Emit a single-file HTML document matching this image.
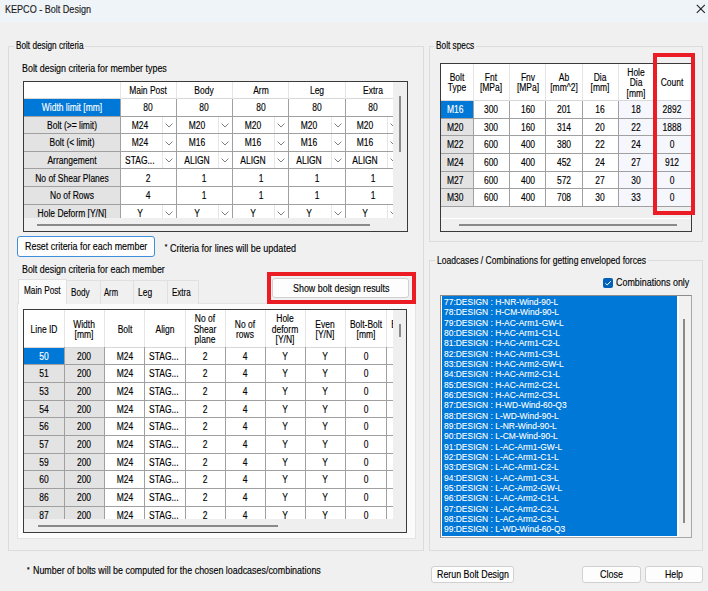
<!DOCTYPE html>
<html><head><meta charset="utf-8"><style>
html,body{margin:0;padding:0;}
body{width:708px;height:591px;overflow:hidden;background:#f0f0f0;position:relative;font-family:"Liberation Sans", sans-serif;}
div{position:absolute;}
.t{white-space:nowrap;-webkit-text-stroke:0.15px currentColor;}
</style></head><body>
<div style="left:0px;top:0px;width:708px;height:22px;background:#eff4f9"></div><div class="t" style="left:5.1px;top:3.33px;font-size:11.38px;line-height:13.65px;color:#1a1a1a;transform:scaleX(0.7956);transform-origin:0 0;">KEPCO - Bolt Design</div><svg style="position:absolute;left:696px;top:4px" width="10" height="10" viewBox="0 0 10 10"><path d="M0.8 0.8 L8.8 8.8 M8.8 0.8 L0.8 8.8" stroke="#202020" stroke-width="1.1" fill="none"/></svg><div style="left:8px;top:45.5px;width:416px;height:505.5px;border:1px solid #dcdcdc;box-sizing:border-box"></div><div style="left:13.5px;top:42.5px;width:71.5px;height:6px;background:#f0f0f0"></div><div class="t" style="left:15.5px;top:40.48px;font-size:10.38px;line-height:12.45px;color:#000;transform:scaleX(0.7909);transform-origin:0 0;">Bolt design criteria</div><div style="left:429px;top:45.5px;width:274px;height:196px;border:1px solid #dcdcdc;box-sizing:border-box"></div><div style="left:434px;top:42.5px;width:42.2px;height:6px;background:#f0f0f0"></div><div class="t" style="left:436px;top:40.48px;font-size:10.38px;line-height:12.45px;color:#000;transform:scaleX(0.7981);transform-origin:0 0;">Bolt specs</div><div style="left:429px;top:260px;width:274px;height:290.5px;border:1px solid #dcdcdc;box-sizing:border-box"></div><div style="left:434.5px;top:257px;width:213px;height:6px;background:#f0f0f0"></div><div class="t" style="left:436.5px;top:254.13px;font-size:10.75px;line-height:12.9px;color:#000;transform:scaleX(0.7967);transform-origin:0 0;">Loadcases / Combinations for getting enveloped forces</div><div class="t" style="left:22px;top:62.02px;font-size:11.12px;line-height:13.35px;color:#000;transform:scaleX(0.8004);transform-origin:0 0;">Bolt design criteria for member types</div><div style="left:23px;top:81px;width:384px;height:150px;background:#fff;overflow:hidden"><div style="left:0;top:0;width:370.3px;height:137px;overflow:hidden"><div style="left:0px;top:17.7px;width:97px;height:17.56px;background:#0078d7"></div><div style="left:0px;top:35.26px;width:97px;height:17.56px;background:#e3e3e3"></div><div style="left:0px;top:52.82px;width:97px;height:17.56px;background:#e3e3e3"></div><div style="left:0px;top:70.38px;width:97px;height:17.56px;background:#e3e3e3"></div><div style="left:0px;top:87.94px;width:97px;height:17.56px;background:#e3e3e3"></div><div style="left:0px;top:105.5px;width:97px;height:17.56px;background:#e3e3e3"></div><div style="left:0px;top:123.06px;width:97px;height:17.56px;background:#e3e3e3"></div><div style="left:0px;top:17.2px;width:380px;height:1px;background:#d8d8d8"></div><div style="left:0px;top:34.76px;width:380px;height:1px;background:#a0a0a0"></div><div style="left:0px;top:52.32px;width:380px;height:1px;background:#a0a0a0"></div><div style="left:0px;top:69.88px;width:380px;height:1px;background:#a0a0a0"></div><div style="left:0px;top:87.44px;width:380px;height:1px;background:#a0a0a0"></div><div style="left:0px;top:105px;width:380px;height:1px;background:#a0a0a0"></div><div style="left:0px;top:122.56px;width:380px;height:1px;background:#a0a0a0"></div><div style="left:0px;top:140.12px;width:380px;height:1px;background:#a0a0a0"></div><div style="left:96.5px;top:17.7px;width:1px;height:140px;background:#a0a0a0"></div><div style="left:96.5px;top:0px;width:1px;height:17.7px;background:#e5e5e5"></div><div style="left:152.75px;top:17.7px;width:1px;height:140px;background:#a0a0a0"></div><div style="left:152.75px;top:0px;width:1px;height:17.7px;background:#e5e5e5"></div><div style="left:209px;top:17.7px;width:1px;height:140px;background:#a0a0a0"></div><div style="left:209px;top:0px;width:1px;height:17.7px;background:#e5e5e5"></div><div style="left:265.25px;top:17.7px;width:1px;height:140px;background:#a0a0a0"></div><div style="left:265.25px;top:0px;width:1px;height:17.7px;background:#e5e5e5"></div><div style="left:321.5px;top:17.7px;width:1px;height:140px;background:#a0a0a0"></div><div style="left:321.5px;top:0px;width:1px;height:17.7px;background:#e5e5e5"></div><div style="left:377.75px;top:17.7px;width:1px;height:140px;background:#a0a0a0"></div><div style="left:377.75px;top:0px;width:1px;height:17.7px;background:#e5e5e5"></div><div class="t" style="left:65.12px;top:3.19px;width:120px;text-align:center;font-size:10.62px;line-height:12.75px;color:#000;transform:scaleX(0.8);">Main Post</div><div class="t" style="left:121.38px;top:3.19px;width:120px;text-align:center;font-size:10.62px;line-height:12.75px;color:#000;transform:scaleX(0.8);">Body</div><div class="t" style="left:177.62px;top:3.19px;width:120px;text-align:center;font-size:10.62px;line-height:12.75px;color:#000;transform:scaleX(0.8);">Arm</div><div class="t" style="left:233.88px;top:3.19px;width:120px;text-align:center;font-size:10.62px;line-height:12.75px;color:#000;transform:scaleX(0.8);">Leg</div><div class="t" style="left:290.12px;top:3.19px;width:120px;text-align:center;font-size:10.62px;line-height:12.75px;color:#000;transform:scaleX(0.8);">Extra</div><div class="t" style="left:-11.5px;top:20.32px;width:120px;text-align:center;font-size:10.62px;line-height:12.75px;color:#fff;transform:scaleX(0.8);">Width limit [mm]</div><div class="t" style="left:-11.5px;top:37.88px;width:120px;text-align:center;font-size:10.62px;line-height:12.75px;color:#000;transform:scaleX(0.8);">Bolt (&gt;= limit)</div><div class="t" style="left:-11.5px;top:55.44px;width:120px;text-align:center;font-size:10.62px;line-height:12.75px;color:#000;transform:scaleX(0.8);">Bolt (&lt; limit)</div><div class="t" style="left:-11.5px;top:73px;width:120px;text-align:center;font-size:10.62px;line-height:12.75px;color:#000;transform:scaleX(0.8);">Arrangement</div><div class="t" style="left:-11.5px;top:90.56px;width:120px;text-align:center;font-size:10.62px;line-height:12.75px;color:#000;transform:scaleX(0.8);">No of Shear Planes</div><div class="t" style="left:-11.5px;top:108.12px;width:120px;text-align:center;font-size:10.62px;line-height:12.75px;color:#000;transform:scaleX(0.8);">No of Rows</div><div class="t" style="left:-11.5px;top:125.68px;width:120px;text-align:center;font-size:10.62px;line-height:12.75px;color:#000;transform:scaleX(0.8);">Hole Deform [Y/N]</div><div class="t" style="left:65.12px;top:20.32px;width:120px;text-align:center;font-size:10.62px;line-height:12.75px;color:#000;transform:scaleX(0.8);">80</div><div class="t" style="left:121.38px;top:20.32px;width:120px;text-align:center;font-size:10.62px;line-height:12.75px;color:#000;transform:scaleX(0.8);">80</div><div class="t" style="left:177.62px;top:20.32px;width:120px;text-align:center;font-size:10.62px;line-height:12.75px;color:#000;transform:scaleX(0.8);">80</div><div class="t" style="left:233.88px;top:20.32px;width:120px;text-align:center;font-size:10.62px;line-height:12.75px;color:#000;transform:scaleX(0.8);">80</div><div class="t" style="left:290.12px;top:20.32px;width:120px;text-align:center;font-size:10.62px;line-height:12.75px;color:#000;transform:scaleX(0.8);">80</div><div style="left:138.75px;top:35.86px;width:1px;height:16.36px;background:#e6e6e6"></div><svg style="position:absolute;left:141.75px;top:42.24px" width="8" height="5" viewBox="0 0 8 5"><path d="M0.6 0.6 L4 4 L7.4 0.6" stroke="#707070" stroke-width="0.9" fill="none"/></svg><div class="t" style="left:57.43px;top:37.88px;width:120px;text-align:center;font-size:10.62px;line-height:12.75px;color:#000;transform:scaleX(0.8);">M24</div><div style="left:195px;top:35.86px;width:1px;height:16.36px;background:#e6e6e6"></div><svg style="position:absolute;left:198px;top:42.24px" width="8" height="5" viewBox="0 0 8 5"><path d="M0.6 0.6 L4 4 L7.4 0.6" stroke="#707070" stroke-width="0.9" fill="none"/></svg><div class="t" style="left:113.68px;top:37.88px;width:120px;text-align:center;font-size:10.62px;line-height:12.75px;color:#000;transform:scaleX(0.8);">M20</div><div style="left:251.25px;top:35.86px;width:1px;height:16.36px;background:#e6e6e6"></div><svg style="position:absolute;left:254.25px;top:42.24px" width="8" height="5" viewBox="0 0 8 5"><path d="M0.6 0.6 L4 4 L7.4 0.6" stroke="#707070" stroke-width="0.9" fill="none"/></svg><div class="t" style="left:169.93px;top:37.88px;width:120px;text-align:center;font-size:10.62px;line-height:12.75px;color:#000;transform:scaleX(0.8);">M20</div><div style="left:307.5px;top:35.86px;width:1px;height:16.36px;background:#e6e6e6"></div><svg style="position:absolute;left:310.5px;top:42.24px" width="8" height="5" viewBox="0 0 8 5"><path d="M0.6 0.6 L4 4 L7.4 0.6" stroke="#707070" stroke-width="0.9" fill="none"/></svg><div class="t" style="left:226.18px;top:37.88px;width:120px;text-align:center;font-size:10.62px;line-height:12.75px;color:#000;transform:scaleX(0.8);">M20</div><div style="left:363.75px;top:35.86px;width:1px;height:16.36px;background:#e6e6e6"></div><svg style="position:absolute;left:366.75px;top:42.24px" width="8" height="5" viewBox="0 0 8 5"><path d="M0.6 0.6 L4 4 L7.4 0.6" stroke="#707070" stroke-width="0.9" fill="none"/></svg><div class="t" style="left:282.43px;top:37.88px;width:120px;text-align:center;font-size:10.62px;line-height:12.75px;color:#000;transform:scaleX(0.8);">M20</div><div style="left:138.75px;top:53.42px;width:1px;height:16.36px;background:#e6e6e6"></div><svg style="position:absolute;left:141.75px;top:59.8px" width="8" height="5" viewBox="0 0 8 5"><path d="M0.6 0.6 L4 4 L7.4 0.6" stroke="#707070" stroke-width="0.9" fill="none"/></svg><div class="t" style="left:57.43px;top:55.44px;width:120px;text-align:center;font-size:10.62px;line-height:12.75px;color:#000;transform:scaleX(0.8);">M24</div><div style="left:195px;top:53.42px;width:1px;height:16.36px;background:#e6e6e6"></div><svg style="position:absolute;left:198px;top:59.8px" width="8" height="5" viewBox="0 0 8 5"><path d="M0.6 0.6 L4 4 L7.4 0.6" stroke="#707070" stroke-width="0.9" fill="none"/></svg><div class="t" style="left:113.68px;top:55.44px;width:120px;text-align:center;font-size:10.62px;line-height:12.75px;color:#000;transform:scaleX(0.8);">M16</div><div style="left:251.25px;top:53.42px;width:1px;height:16.36px;background:#e6e6e6"></div><svg style="position:absolute;left:254.25px;top:59.8px" width="8" height="5" viewBox="0 0 8 5"><path d="M0.6 0.6 L4 4 L7.4 0.6" stroke="#707070" stroke-width="0.9" fill="none"/></svg><div class="t" style="left:169.93px;top:55.44px;width:120px;text-align:center;font-size:10.62px;line-height:12.75px;color:#000;transform:scaleX(0.8);">M16</div><div style="left:307.5px;top:53.42px;width:1px;height:16.36px;background:#e6e6e6"></div><svg style="position:absolute;left:310.5px;top:59.8px" width="8" height="5" viewBox="0 0 8 5"><path d="M0.6 0.6 L4 4 L7.4 0.6" stroke="#707070" stroke-width="0.9" fill="none"/></svg><div class="t" style="left:226.18px;top:55.44px;width:120px;text-align:center;font-size:10.62px;line-height:12.75px;color:#000;transform:scaleX(0.8);">M16</div><div style="left:363.75px;top:53.42px;width:1px;height:16.36px;background:#e6e6e6"></div><svg style="position:absolute;left:366.75px;top:59.8px" width="8" height="5" viewBox="0 0 8 5"><path d="M0.6 0.6 L4 4 L7.4 0.6" stroke="#707070" stroke-width="0.9" fill="none"/></svg><div class="t" style="left:282.43px;top:55.44px;width:120px;text-align:center;font-size:10.62px;line-height:12.75px;color:#000;transform:scaleX(0.8);">M16</div><div style="left:138.75px;top:70.98px;width:1px;height:16.36px;background:#e6e6e6"></div><svg style="position:absolute;left:141.75px;top:77.36px" width="8" height="5" viewBox="0 0 8 5"><path d="M0.6 0.6 L4 4 L7.4 0.6" stroke="#707070" stroke-width="0.9" fill="none"/></svg><div class="t" style="left:101.5px;top:73px;font-size:10.62px;line-height:12.75px;color:#000;transform:scaleX(0.8000);transform-origin:0 0;">STAG...</div><div style="left:195px;top:70.98px;width:1px;height:16.36px;background:#e6e6e6"></div><svg style="position:absolute;left:198px;top:77.36px" width="8" height="5" viewBox="0 0 8 5"><path d="M0.6 0.6 L4 4 L7.4 0.6" stroke="#707070" stroke-width="0.9" fill="none"/></svg><div class="t" style="left:113.68px;top:73px;width:120px;text-align:center;font-size:10.62px;line-height:12.75px;color:#000;transform:scaleX(0.8);">ALIGN</div><div style="left:251.25px;top:70.98px;width:1px;height:16.36px;background:#e6e6e6"></div><svg style="position:absolute;left:254.25px;top:77.36px" width="8" height="5" viewBox="0 0 8 5"><path d="M0.6 0.6 L4 4 L7.4 0.6" stroke="#707070" stroke-width="0.9" fill="none"/></svg><div class="t" style="left:169.93px;top:73px;width:120px;text-align:center;font-size:10.62px;line-height:12.75px;color:#000;transform:scaleX(0.8);">ALIGN</div><div style="left:307.5px;top:70.98px;width:1px;height:16.36px;background:#e6e6e6"></div><svg style="position:absolute;left:310.5px;top:77.36px" width="8" height="5" viewBox="0 0 8 5"><path d="M0.6 0.6 L4 4 L7.4 0.6" stroke="#707070" stroke-width="0.9" fill="none"/></svg><div class="t" style="left:226.18px;top:73px;width:120px;text-align:center;font-size:10.62px;line-height:12.75px;color:#000;transform:scaleX(0.8);">ALIGN</div><div style="left:363.75px;top:70.98px;width:1px;height:16.36px;background:#e6e6e6"></div><svg style="position:absolute;left:366.75px;top:77.36px" width="8" height="5" viewBox="0 0 8 5"><path d="M0.6 0.6 L4 4 L7.4 0.6" stroke="#707070" stroke-width="0.9" fill="none"/></svg><div class="t" style="left:282.43px;top:73px;width:120px;text-align:center;font-size:10.62px;line-height:12.75px;color:#000;transform:scaleX(0.8);">ALIGN</div><div class="t" style="left:65.12px;top:90.56px;width:120px;text-align:center;font-size:10.62px;line-height:12.75px;color:#000;transform:scaleX(0.8);">2</div><div class="t" style="left:121.38px;top:90.56px;width:120px;text-align:center;font-size:10.62px;line-height:12.75px;color:#000;transform:scaleX(0.8);">1</div><div class="t" style="left:177.62px;top:90.56px;width:120px;text-align:center;font-size:10.62px;line-height:12.75px;color:#000;transform:scaleX(0.8);">1</div><div class="t" style="left:233.88px;top:90.56px;width:120px;text-align:center;font-size:10.62px;line-height:12.75px;color:#000;transform:scaleX(0.8);">1</div><div class="t" style="left:290.12px;top:90.56px;width:120px;text-align:center;font-size:10.62px;line-height:12.75px;color:#000;transform:scaleX(0.8);">1</div><div class="t" style="left:65.12px;top:108.12px;width:120px;text-align:center;font-size:10.62px;line-height:12.75px;color:#000;transform:scaleX(0.8);">4</div><div class="t" style="left:121.38px;top:108.12px;width:120px;text-align:center;font-size:10.62px;line-height:12.75px;color:#000;transform:scaleX(0.8);">1</div><div class="t" style="left:177.62px;top:108.12px;width:120px;text-align:center;font-size:10.62px;line-height:12.75px;color:#000;transform:scaleX(0.8);">1</div><div class="t" style="left:233.88px;top:108.12px;width:120px;text-align:center;font-size:10.62px;line-height:12.75px;color:#000;transform:scaleX(0.8);">1</div><div class="t" style="left:290.12px;top:108.12px;width:120px;text-align:center;font-size:10.62px;line-height:12.75px;color:#000;transform:scaleX(0.8);">1</div><div style="left:138.75px;top:123.66px;width:1px;height:16.36px;background:#e6e6e6"></div><svg style="position:absolute;left:141.75px;top:130.04px" width="8" height="5" viewBox="0 0 8 5"><path d="M0.6 0.6 L4 4 L7.4 0.6" stroke="#707070" stroke-width="0.9" fill="none"/></svg><div class="t" style="left:57.43px;top:125.68px;width:120px;text-align:center;font-size:10.62px;line-height:12.75px;color:#000;transform:scaleX(0.8);">Y</div><div style="left:195px;top:123.66px;width:1px;height:16.36px;background:#e6e6e6"></div><svg style="position:absolute;left:198px;top:130.04px" width="8" height="5" viewBox="0 0 8 5"><path d="M0.6 0.6 L4 4 L7.4 0.6" stroke="#707070" stroke-width="0.9" fill="none"/></svg><div class="t" style="left:113.68px;top:125.68px;width:120px;text-align:center;font-size:10.62px;line-height:12.75px;color:#000;transform:scaleX(0.8);">Y</div><div style="left:251.25px;top:123.66px;width:1px;height:16.36px;background:#e6e6e6"></div><svg style="position:absolute;left:254.25px;top:130.04px" width="8" height="5" viewBox="0 0 8 5"><path d="M0.6 0.6 L4 4 L7.4 0.6" stroke="#707070" stroke-width="0.9" fill="none"/></svg><div class="t" style="left:169.93px;top:125.68px;width:120px;text-align:center;font-size:10.62px;line-height:12.75px;color:#000;transform:scaleX(0.8);">Y</div><div style="left:307.5px;top:123.66px;width:1px;height:16.36px;background:#e6e6e6"></div><svg style="position:absolute;left:310.5px;top:130.04px" width="8" height="5" viewBox="0 0 8 5"><path d="M0.6 0.6 L4 4 L7.4 0.6" stroke="#707070" stroke-width="0.9" fill="none"/></svg><div class="t" style="left:226.18px;top:125.68px;width:120px;text-align:center;font-size:10.62px;line-height:12.75px;color:#000;transform:scaleX(0.8);">Y</div><div style="left:363.75px;top:123.66px;width:1px;height:16.36px;background:#e6e6e6"></div><svg style="position:absolute;left:366.75px;top:130.04px" width="8" height="5" viewBox="0 0 8 5"><path d="M0.6 0.6 L4 4 L7.4 0.6" stroke="#707070" stroke-width="0.9" fill="none"/></svg><div class="t" style="left:282.43px;top:125.68px;width:120px;text-align:center;font-size:10.62px;line-height:12.75px;color:#000;transform:scaleX(0.8);">Y</div></div><div style="left:370.3px;top:0px;width:13.7px;height:137px;background:#efefef"></div><div style="left:0px;top:137px;width:384px;height:13px;background:#efefef"></div><div style="left:376.3px;top:14.5px;width:2px;height:56.5px;background:#8a8a8a"></div><div style="left:14px;top:143px;width:333px;height:1.6px;background:#8a8a8a"></div></div><div style="left:22.5px;top:80.8px;width:385px;height:151.2px;border:1px solid #3a3a3a;box-sizing:border-box"></div><div style="left:17px;top:236px;width:137.5px;height:21px;border:1.5px solid #3f8fdc;border-radius:3px;background:#fdfdfd;box-sizing:border-box"></div><div class="t" style="left:25px;top:240.27px;font-size:11.12px;line-height:13.35px;color:#000;transform:scaleX(0.8022);transform-origin:0 0;">Reset criteria for each member</div><div class="t" style="left:164.8px;top:242.85px;font-size:6.5px;line-height:7.8px;color:#000;transform:scaleX(1.0000);transform-origin:0 0;">*</div><div class="t" style="left:170.2px;top:241.77px;font-size:11.12px;line-height:13.35px;color:#000;transform:scaleX(0.8125);transform-origin:0 0;">Criteria for lines will be updated</div><div class="t" style="left:22px;top:263.27px;font-size:11.12px;line-height:13.35px;color:#000;transform:scaleX(0.8003);transform-origin:0 0;">Bolt design criteria for each member</div><div style="left:17.2px;top:303px;width:399px;height:235.5px;background:#fbfbfb;border:1px solid #e3e3e3;box-sizing:border-box"></div><div style="left:66.4px;top:280px;width:33.3px;height:23.5px;background:#f0f0f0;border-left:1px solid #e0e0e0;border-top:1px solid #e0e0e0;box-sizing:border-box"></div><div class="t" style="left:70.7px;top:285.67px;font-size:11.12px;line-height:13.35px;color:#000;transform:scaleX(0.7335);transform-origin:0 0;">Body</div><div style="left:99.7px;top:280px;width:32.9px;height:23.5px;background:#f0f0f0;border-left:1px solid #e0e0e0;border-top:1px solid #e0e0e0;box-sizing:border-box"></div><div class="t" style="left:104.3px;top:285.67px;font-size:11.12px;line-height:13.35px;color:#000;transform:scaleX(0.6915);transform-origin:0 0;">Arm</div><div style="left:132.6px;top:280px;width:34.4px;height:23.5px;background:#f0f0f0;border-left:1px solid #e0e0e0;border-top:1px solid #e0e0e0;box-sizing:border-box"></div><div class="t" style="left:138.2px;top:285.67px;font-size:11.12px;line-height:13.35px;color:#000;transform:scaleX(0.7597);transform-origin:0 0;">Leg</div><div style="left:167px;top:280px;width:31.7px;height:23.5px;background:#f0f0f0;border-left:1px solid #e0e0e0;border-top:1px solid #e0e0e0;border-right:1px solid #e0e0e0;box-sizing:border-box"></div><div class="t" style="left:172.1px;top:285.67px;font-size:11.12px;line-height:13.35px;color:#000;transform:scaleX(0.7202);transform-origin:0 0;">Extra</div><div style="left:17.6px;top:278.5px;width:49.6px;height:25.5px;background:#fbfbfb;border:1px solid #e0e0e0;border-bottom:none;box-sizing:border-box"></div><div class="t" style="left:23.6px;top:283.97px;font-size:11.12px;line-height:13.35px;color:#000;transform:scaleX(0.7420);transform-origin:0 0;">Main Post</div><div style="left:272.4px;top:278.3px;width:136.6px;height:19.8px;border:1px solid #d0d0d0;border-radius:3px;background:#fdfdfd;box-sizing:border-box"></div><div class="t" style="left:292.7px;top:282.07px;font-size:11.12px;line-height:13.35px;color:#000;transform:scaleX(0.8011);transform-origin:0 0;">Show bolt design results</div><div style="left:267.3px;top:272.2px;width:149.2px;height:32.3px;border:4.2px solid #ec1c24;box-sizing:border-box"></div><div style="left:23.5px;top:309.5px;width:383.5px;height:223px;background:#fff;overflow:hidden"><div style="left:0;top:0;width:369.2px;height:209.25px;overflow:hidden"><div style="left:0px;top:37.6px;width:80.75px;height:17.67px;background:#e3e3e3"></div><div style="left:0px;top:37.6px;width:40.75px;height:17.67px;background:#0078d7"></div><div style="left:0px;top:55.27px;width:80.75px;height:17.67px;background:#e3e3e3"></div><div style="left:0px;top:72.94px;width:80.75px;height:17.67px;background:#e3e3e3"></div><div style="left:0px;top:90.61px;width:80.75px;height:17.67px;background:#e3e3e3"></div><div style="left:0px;top:108.28px;width:80.75px;height:17.67px;background:#e3e3e3"></div><div style="left:0px;top:125.95px;width:80.75px;height:17.67px;background:#e3e3e3"></div><div style="left:0px;top:143.62px;width:80.75px;height:17.67px;background:#e3e3e3"></div><div style="left:0px;top:161.29px;width:80.75px;height:17.67px;background:#e3e3e3"></div><div style="left:0px;top:178.96px;width:80.75px;height:17.67px;background:#e3e3e3"></div><div style="left:0px;top:196.63px;width:80.75px;height:17.67px;background:#e3e3e3"></div><div style="left:0px;top:37.1px;width:400px;height:1px;background:#d8d8d8"></div><div style="left:0px;top:54.77px;width:400px;height:1px;background:#a0a0a0"></div><div style="left:0px;top:72.44px;width:400px;height:1px;background:#a0a0a0"></div><div style="left:0px;top:90.11px;width:400px;height:1px;background:#a0a0a0"></div><div style="left:0px;top:107.78px;width:400px;height:1px;background:#a0a0a0"></div><div style="left:0px;top:125.45px;width:400px;height:1px;background:#a0a0a0"></div><div style="left:0px;top:143.12px;width:400px;height:1px;background:#a0a0a0"></div><div style="left:0px;top:160.79px;width:400px;height:1px;background:#a0a0a0"></div><div style="left:0px;top:178.46px;width:400px;height:1px;background:#a0a0a0"></div><div style="left:0px;top:196.13px;width:400px;height:1px;background:#a0a0a0"></div><div style="left:0px;top:213.8px;width:400px;height:1px;background:#a0a0a0"></div><div style="left:40.25px;top:37.6px;width:1px;height:200px;background:#a0a0a0"></div><div style="left:40.25px;top:0px;width:1px;height:37.6px;background:#e5e5e5"></div><div style="left:80.25px;top:37.6px;width:1px;height:200px;background:#a0a0a0"></div><div style="left:80.25px;top:0px;width:1px;height:37.6px;background:#e5e5e5"></div><div style="left:120.75px;top:37.6px;width:1px;height:200px;background:#a0a0a0"></div><div style="left:120.75px;top:0px;width:1px;height:37.6px;background:#e5e5e5"></div><div style="left:161px;top:37.6px;width:1px;height:200px;background:#a0a0a0"></div><div style="left:161px;top:0px;width:1px;height:37.6px;background:#e5e5e5"></div><div style="left:201px;top:37.6px;width:1px;height:200px;background:#a0a0a0"></div><div style="left:201px;top:0px;width:1px;height:37.6px;background:#e5e5e5"></div><div style="left:241px;top:37.6px;width:1px;height:200px;background:#a0a0a0"></div><div style="left:241px;top:0px;width:1px;height:37.6px;background:#e5e5e5"></div><div style="left:281px;top:37.6px;width:1px;height:200px;background:#a0a0a0"></div><div style="left:281px;top:0px;width:1px;height:37.6px;background:#e5e5e5"></div><div style="left:321.5px;top:37.6px;width:1px;height:200px;background:#a0a0a0"></div><div style="left:321.5px;top:0px;width:1px;height:37.6px;background:#e5e5e5"></div><div style="left:362px;top:37.6px;width:1px;height:200px;background:#a0a0a0"></div><div style="left:362px;top:0px;width:1px;height:37.6px;background:#e5e5e5"></div><div class="t" style="left:-39.62px;top:13.24px;width:120px;text-align:center;font-size:10.62px;line-height:12.75px;color:#000;transform:scaleX(0.8);">Line ID</div><div class="t" style="left:0.75px;top:8.04px;width:120px;text-align:center;font-size:10.62px;line-height:12.75px;color:#000;transform:scaleX(0.8);">Width</div><div class="t" style="left:0.75px;top:18.44px;width:120px;text-align:center;font-size:10.62px;line-height:12.75px;color:#000;transform:scaleX(0.8);">[mm]</div><div class="t" style="left:41px;top:13.24px;width:120px;text-align:center;font-size:10.62px;line-height:12.75px;color:#000;transform:scaleX(0.8);">Bolt</div><div class="t" style="left:81.38px;top:13.24px;width:120px;text-align:center;font-size:10.62px;line-height:12.75px;color:#000;transform:scaleX(0.8);">Align</div><div class="t" style="left:121.5px;top:2.84px;width:120px;text-align:center;font-size:10.62px;line-height:12.75px;color:#000;transform:scaleX(0.8);">No of</div><div class="t" style="left:121.5px;top:13.24px;width:120px;text-align:center;font-size:10.62px;line-height:12.75px;color:#000;transform:scaleX(0.8);">Shear</div><div class="t" style="left:121.5px;top:23.64px;width:120px;text-align:center;font-size:10.62px;line-height:12.75px;color:#000;transform:scaleX(0.8);">plane</div><div class="t" style="left:161.5px;top:8.04px;width:120px;text-align:center;font-size:10.62px;line-height:12.75px;color:#000;transform:scaleX(0.8);">No of</div><div class="t" style="left:161.5px;top:18.44px;width:120px;text-align:center;font-size:10.62px;line-height:12.75px;color:#000;transform:scaleX(0.8);">rows</div><div class="t" style="left:201.5px;top:2.84px;width:120px;text-align:center;font-size:10.62px;line-height:12.75px;color:#000;transform:scaleX(0.8);">Hole</div><div class="t" style="left:201.5px;top:13.24px;width:120px;text-align:center;font-size:10.62px;line-height:12.75px;color:#000;transform:scaleX(0.8);">deform</div><div class="t" style="left:201.5px;top:23.64px;width:120px;text-align:center;font-size:10.62px;line-height:12.75px;color:#000;transform:scaleX(0.8);">[Y/N]</div><div class="t" style="left:241.75px;top:8.04px;width:120px;text-align:center;font-size:10.62px;line-height:12.75px;color:#000;transform:scaleX(0.8);">Even</div><div class="t" style="left:241.75px;top:18.44px;width:120px;text-align:center;font-size:10.62px;line-height:12.75px;color:#000;transform:scaleX(0.8);">[Y/N]</div><div class="t" style="left:282.25px;top:8.04px;width:120px;text-align:center;font-size:10.62px;line-height:12.75px;color:#000;transform:scaleX(0.8);">Bolt-Bolt</div><div class="t" style="left:282.25px;top:18.44px;width:120px;text-align:center;font-size:10.62px;line-height:12.75px;color:#000;transform:scaleX(0.8);">[mm]</div><div class="t" style="left:326.5px;top:8.04px;width:120px;text-align:center;font-size:10.62px;line-height:12.75px;color:#000;transform:scaleX(0.8);">Bolt-Edge</div><div class="t" style="left:326.5px;top:18.44px;width:120px;text-align:center;font-size:10.62px;line-height:12.75px;color:#000;transform:scaleX(0.8);">[mm]</div><div class="t" style="left:-39.62px;top:40.28px;width:120px;text-align:center;font-size:10.62px;line-height:12.75px;color:#fff;transform:scaleX(0.8);">50</div><div class="t" style="left:0.75px;top:40.28px;width:120px;text-align:center;font-size:10.62px;line-height:12.75px;color:#000;transform:scaleX(0.8);">200</div><div class="t" style="left:41px;top:40.28px;width:120px;text-align:center;font-size:10.62px;line-height:12.75px;color:#000;transform:scaleX(0.8);">M24</div><div class="t" style="left:125.55px;top:40.28px;font-size:10.62px;line-height:12.75px;color:#000;transform:scaleX(0.8000);transform-origin:0 0;">STAG...</div><div class="t" style="left:121.5px;top:40.28px;width:120px;text-align:center;font-size:10.62px;line-height:12.75px;color:#000;transform:scaleX(0.8);">2</div><div class="t" style="left:161.5px;top:40.28px;width:120px;text-align:center;font-size:10.62px;line-height:12.75px;color:#000;transform:scaleX(0.8);">4</div><div class="t" style="left:201.5px;top:40.28px;width:120px;text-align:center;font-size:10.62px;line-height:12.75px;color:#000;transform:scaleX(0.8);">Y</div><div class="t" style="left:241.75px;top:40.28px;width:120px;text-align:center;font-size:10.62px;line-height:12.75px;color:#000;transform:scaleX(0.8);">Y</div><div class="t" style="left:282.25px;top:40.28px;width:120px;text-align:center;font-size:10.62px;line-height:12.75px;color:#000;transform:scaleX(0.8);">0</div><div class="t" style="left:-39.62px;top:57.95px;width:120px;text-align:center;font-size:10.62px;line-height:12.75px;color:#000;transform:scaleX(0.8);">51</div><div class="t" style="left:0.75px;top:57.95px;width:120px;text-align:center;font-size:10.62px;line-height:12.75px;color:#000;transform:scaleX(0.8);">200</div><div class="t" style="left:41px;top:57.95px;width:120px;text-align:center;font-size:10.62px;line-height:12.75px;color:#000;transform:scaleX(0.8);">M24</div><div class="t" style="left:125.55px;top:57.95px;font-size:10.62px;line-height:12.75px;color:#000;transform:scaleX(0.8000);transform-origin:0 0;">STAG...</div><div class="t" style="left:121.5px;top:57.95px;width:120px;text-align:center;font-size:10.62px;line-height:12.75px;color:#000;transform:scaleX(0.8);">2</div><div class="t" style="left:161.5px;top:57.95px;width:120px;text-align:center;font-size:10.62px;line-height:12.75px;color:#000;transform:scaleX(0.8);">4</div><div class="t" style="left:201.5px;top:57.95px;width:120px;text-align:center;font-size:10.62px;line-height:12.75px;color:#000;transform:scaleX(0.8);">Y</div><div class="t" style="left:241.75px;top:57.95px;width:120px;text-align:center;font-size:10.62px;line-height:12.75px;color:#000;transform:scaleX(0.8);">Y</div><div class="t" style="left:282.25px;top:57.95px;width:120px;text-align:center;font-size:10.62px;line-height:12.75px;color:#000;transform:scaleX(0.8);">0</div><div class="t" style="left:-39.62px;top:75.62px;width:120px;text-align:center;font-size:10.62px;line-height:12.75px;color:#000;transform:scaleX(0.8);">53</div><div class="t" style="left:0.75px;top:75.62px;width:120px;text-align:center;font-size:10.62px;line-height:12.75px;color:#000;transform:scaleX(0.8);">200</div><div class="t" style="left:41px;top:75.62px;width:120px;text-align:center;font-size:10.62px;line-height:12.75px;color:#000;transform:scaleX(0.8);">M24</div><div class="t" style="left:125.55px;top:75.62px;font-size:10.62px;line-height:12.75px;color:#000;transform:scaleX(0.8000);transform-origin:0 0;">STAG...</div><div class="t" style="left:121.5px;top:75.62px;width:120px;text-align:center;font-size:10.62px;line-height:12.75px;color:#000;transform:scaleX(0.8);">2</div><div class="t" style="left:161.5px;top:75.62px;width:120px;text-align:center;font-size:10.62px;line-height:12.75px;color:#000;transform:scaleX(0.8);">4</div><div class="t" style="left:201.5px;top:75.62px;width:120px;text-align:center;font-size:10.62px;line-height:12.75px;color:#000;transform:scaleX(0.8);">Y</div><div class="t" style="left:241.75px;top:75.62px;width:120px;text-align:center;font-size:10.62px;line-height:12.75px;color:#000;transform:scaleX(0.8);">Y</div><div class="t" style="left:282.25px;top:75.62px;width:120px;text-align:center;font-size:10.62px;line-height:12.75px;color:#000;transform:scaleX(0.8);">0</div><div class="t" style="left:-39.62px;top:93.29px;width:120px;text-align:center;font-size:10.62px;line-height:12.75px;color:#000;transform:scaleX(0.8);">54</div><div class="t" style="left:0.75px;top:93.29px;width:120px;text-align:center;font-size:10.62px;line-height:12.75px;color:#000;transform:scaleX(0.8);">200</div><div class="t" style="left:41px;top:93.29px;width:120px;text-align:center;font-size:10.62px;line-height:12.75px;color:#000;transform:scaleX(0.8);">M24</div><div class="t" style="left:125.55px;top:93.29px;font-size:10.62px;line-height:12.75px;color:#000;transform:scaleX(0.8000);transform-origin:0 0;">STAG...</div><div class="t" style="left:121.5px;top:93.29px;width:120px;text-align:center;font-size:10.62px;line-height:12.75px;color:#000;transform:scaleX(0.8);">2</div><div class="t" style="left:161.5px;top:93.29px;width:120px;text-align:center;font-size:10.62px;line-height:12.75px;color:#000;transform:scaleX(0.8);">4</div><div class="t" style="left:201.5px;top:93.29px;width:120px;text-align:center;font-size:10.62px;line-height:12.75px;color:#000;transform:scaleX(0.8);">Y</div><div class="t" style="left:241.75px;top:93.29px;width:120px;text-align:center;font-size:10.62px;line-height:12.75px;color:#000;transform:scaleX(0.8);">Y</div><div class="t" style="left:282.25px;top:93.29px;width:120px;text-align:center;font-size:10.62px;line-height:12.75px;color:#000;transform:scaleX(0.8);">0</div><div class="t" style="left:-39.62px;top:110.96px;width:120px;text-align:center;font-size:10.62px;line-height:12.75px;color:#000;transform:scaleX(0.8);">56</div><div class="t" style="left:0.75px;top:110.96px;width:120px;text-align:center;font-size:10.62px;line-height:12.75px;color:#000;transform:scaleX(0.8);">200</div><div class="t" style="left:41px;top:110.96px;width:120px;text-align:center;font-size:10.62px;line-height:12.75px;color:#000;transform:scaleX(0.8);">M24</div><div class="t" style="left:125.55px;top:110.96px;font-size:10.62px;line-height:12.75px;color:#000;transform:scaleX(0.8000);transform-origin:0 0;">STAG...</div><div class="t" style="left:121.5px;top:110.96px;width:120px;text-align:center;font-size:10.62px;line-height:12.75px;color:#000;transform:scaleX(0.8);">2</div><div class="t" style="left:161.5px;top:110.96px;width:120px;text-align:center;font-size:10.62px;line-height:12.75px;color:#000;transform:scaleX(0.8);">4</div><div class="t" style="left:201.5px;top:110.96px;width:120px;text-align:center;font-size:10.62px;line-height:12.75px;color:#000;transform:scaleX(0.8);">Y</div><div class="t" style="left:241.75px;top:110.96px;width:120px;text-align:center;font-size:10.62px;line-height:12.75px;color:#000;transform:scaleX(0.8);">Y</div><div class="t" style="left:282.25px;top:110.96px;width:120px;text-align:center;font-size:10.62px;line-height:12.75px;color:#000;transform:scaleX(0.8);">0</div><div class="t" style="left:-39.62px;top:128.63px;width:120px;text-align:center;font-size:10.62px;line-height:12.75px;color:#000;transform:scaleX(0.8);">57</div><div class="t" style="left:0.75px;top:128.63px;width:120px;text-align:center;font-size:10.62px;line-height:12.75px;color:#000;transform:scaleX(0.8);">200</div><div class="t" style="left:41px;top:128.63px;width:120px;text-align:center;font-size:10.62px;line-height:12.75px;color:#000;transform:scaleX(0.8);">M24</div><div class="t" style="left:125.55px;top:128.63px;font-size:10.62px;line-height:12.75px;color:#000;transform:scaleX(0.8000);transform-origin:0 0;">STAG...</div><div class="t" style="left:121.5px;top:128.63px;width:120px;text-align:center;font-size:10.62px;line-height:12.75px;color:#000;transform:scaleX(0.8);">2</div><div class="t" style="left:161.5px;top:128.63px;width:120px;text-align:center;font-size:10.62px;line-height:12.75px;color:#000;transform:scaleX(0.8);">4</div><div class="t" style="left:201.5px;top:128.63px;width:120px;text-align:center;font-size:10.62px;line-height:12.75px;color:#000;transform:scaleX(0.8);">Y</div><div class="t" style="left:241.75px;top:128.63px;width:120px;text-align:center;font-size:10.62px;line-height:12.75px;color:#000;transform:scaleX(0.8);">Y</div><div class="t" style="left:282.25px;top:128.63px;width:120px;text-align:center;font-size:10.62px;line-height:12.75px;color:#000;transform:scaleX(0.8);">0</div><div class="t" style="left:-39.62px;top:146.3px;width:120px;text-align:center;font-size:10.62px;line-height:12.75px;color:#000;transform:scaleX(0.8);">59</div><div class="t" style="left:0.75px;top:146.3px;width:120px;text-align:center;font-size:10.62px;line-height:12.75px;color:#000;transform:scaleX(0.8);">200</div><div class="t" style="left:41px;top:146.3px;width:120px;text-align:center;font-size:10.62px;line-height:12.75px;color:#000;transform:scaleX(0.8);">M24</div><div class="t" style="left:125.55px;top:146.3px;font-size:10.62px;line-height:12.75px;color:#000;transform:scaleX(0.8000);transform-origin:0 0;">STAG...</div><div class="t" style="left:121.5px;top:146.3px;width:120px;text-align:center;font-size:10.62px;line-height:12.75px;color:#000;transform:scaleX(0.8);">2</div><div class="t" style="left:161.5px;top:146.3px;width:120px;text-align:center;font-size:10.62px;line-height:12.75px;color:#000;transform:scaleX(0.8);">4</div><div class="t" style="left:201.5px;top:146.3px;width:120px;text-align:center;font-size:10.62px;line-height:12.75px;color:#000;transform:scaleX(0.8);">Y</div><div class="t" style="left:241.75px;top:146.3px;width:120px;text-align:center;font-size:10.62px;line-height:12.75px;color:#000;transform:scaleX(0.8);">Y</div><div class="t" style="left:282.25px;top:146.3px;width:120px;text-align:center;font-size:10.62px;line-height:12.75px;color:#000;transform:scaleX(0.8);">0</div><div class="t" style="left:-39.62px;top:163.97px;width:120px;text-align:center;font-size:10.62px;line-height:12.75px;color:#000;transform:scaleX(0.8);">60</div><div class="t" style="left:0.75px;top:163.97px;width:120px;text-align:center;font-size:10.62px;line-height:12.75px;color:#000;transform:scaleX(0.8);">200</div><div class="t" style="left:41px;top:163.97px;width:120px;text-align:center;font-size:10.62px;line-height:12.75px;color:#000;transform:scaleX(0.8);">M24</div><div class="t" style="left:125.55px;top:163.97px;font-size:10.62px;line-height:12.75px;color:#000;transform:scaleX(0.8000);transform-origin:0 0;">STAG...</div><div class="t" style="left:121.5px;top:163.97px;width:120px;text-align:center;font-size:10.62px;line-height:12.75px;color:#000;transform:scaleX(0.8);">2</div><div class="t" style="left:161.5px;top:163.97px;width:120px;text-align:center;font-size:10.62px;line-height:12.75px;color:#000;transform:scaleX(0.8);">4</div><div class="t" style="left:201.5px;top:163.97px;width:120px;text-align:center;font-size:10.62px;line-height:12.75px;color:#000;transform:scaleX(0.8);">Y</div><div class="t" style="left:241.75px;top:163.97px;width:120px;text-align:center;font-size:10.62px;line-height:12.75px;color:#000;transform:scaleX(0.8);">Y</div><div class="t" style="left:282.25px;top:163.97px;width:120px;text-align:center;font-size:10.62px;line-height:12.75px;color:#000;transform:scaleX(0.8);">0</div><div class="t" style="left:-39.62px;top:181.64px;width:120px;text-align:center;font-size:10.62px;line-height:12.75px;color:#000;transform:scaleX(0.8);">86</div><div class="t" style="left:0.75px;top:181.64px;width:120px;text-align:center;font-size:10.62px;line-height:12.75px;color:#000;transform:scaleX(0.8);">200</div><div class="t" style="left:41px;top:181.64px;width:120px;text-align:center;font-size:10.62px;line-height:12.75px;color:#000;transform:scaleX(0.8);">M24</div><div class="t" style="left:125.55px;top:181.64px;font-size:10.62px;line-height:12.75px;color:#000;transform:scaleX(0.8000);transform-origin:0 0;">STAG...</div><div class="t" style="left:121.5px;top:181.64px;width:120px;text-align:center;font-size:10.62px;line-height:12.75px;color:#000;transform:scaleX(0.8);">2</div><div class="t" style="left:161.5px;top:181.64px;width:120px;text-align:center;font-size:10.62px;line-height:12.75px;color:#000;transform:scaleX(0.8);">4</div><div class="t" style="left:201.5px;top:181.64px;width:120px;text-align:center;font-size:10.62px;line-height:12.75px;color:#000;transform:scaleX(0.8);">Y</div><div class="t" style="left:241.75px;top:181.64px;width:120px;text-align:center;font-size:10.62px;line-height:12.75px;color:#000;transform:scaleX(0.8);">Y</div><div class="t" style="left:282.25px;top:181.64px;width:120px;text-align:center;font-size:10.62px;line-height:12.75px;color:#000;transform:scaleX(0.8);">0</div><div class="t" style="left:-39.62px;top:199.31px;width:120px;text-align:center;font-size:10.62px;line-height:12.75px;color:#000;transform:scaleX(0.8);">87</div><div class="t" style="left:0.75px;top:199.31px;width:120px;text-align:center;font-size:10.62px;line-height:12.75px;color:#000;transform:scaleX(0.8);">200</div><div class="t" style="left:41px;top:199.31px;width:120px;text-align:center;font-size:10.62px;line-height:12.75px;color:#000;transform:scaleX(0.8);">M24</div><div class="t" style="left:125.55px;top:199.31px;font-size:10.62px;line-height:12.75px;color:#000;transform:scaleX(0.8000);transform-origin:0 0;">STAG...</div><div class="t" style="left:121.5px;top:199.31px;width:120px;text-align:center;font-size:10.62px;line-height:12.75px;color:#000;transform:scaleX(0.8);">2</div><div class="t" style="left:161.5px;top:199.31px;width:120px;text-align:center;font-size:10.62px;line-height:12.75px;color:#000;transform:scaleX(0.8);">4</div><div class="t" style="left:201.5px;top:199.31px;width:120px;text-align:center;font-size:10.62px;line-height:12.75px;color:#000;transform:scaleX(0.8);">Y</div><div class="t" style="left:241.75px;top:199.31px;width:120px;text-align:center;font-size:10.62px;line-height:12.75px;color:#000;transform:scaleX(0.8);">Y</div><div class="t" style="left:282.25px;top:199.31px;width:120px;text-align:center;font-size:10.62px;line-height:12.75px;color:#000;transform:scaleX(0.8);">0</div></div><div style="left:369.2px;top:0px;width:14.3px;height:209.25px;background:#efefef"></div><div style="left:0px;top:209.25px;width:383.5px;height:13.75px;background:#efefef"></div><div style="left:375.8px;top:14.5px;width:2px;height:13px;background:#8a8a8a"></div><div style="left:14.5px;top:215.5px;width:240px;height:1.6px;background:#8a8a8a"></div></div><div style="left:23px;top:309.3px;width:384px;height:223.7px;border:1px solid #3a3a3a;box-sizing:border-box"></div><div style="left:440.5px;top:63px;width:251.5px;height:168px;background:#fff;overflow:hidden"><div style="left:0px;top:143.46px;width:260px;height:11.54px;background:#efefef"></div><div style="left:0px;top:37.5px;width:32.5px;height:17.66px;background:#0078d7"></div><div style="left:178px;top:37.5px;width:71.5px;height:17.66px;background:#f6f6fd"></div><div style="left:0px;top:55.16px;width:32.5px;height:17.66px;background:#e3e3e3"></div><div style="left:178px;top:55.16px;width:71.5px;height:17.66px;background:#f6f6fd"></div><div style="left:0px;top:72.82px;width:32.5px;height:17.66px;background:#e3e3e3"></div><div style="left:178px;top:72.82px;width:71.5px;height:17.66px;background:#f6f6fd"></div><div style="left:0px;top:90.48px;width:32.5px;height:17.66px;background:#e3e3e3"></div><div style="left:178px;top:90.48px;width:71.5px;height:17.66px;background:#f6f6fd"></div><div style="left:0px;top:108.14px;width:32.5px;height:17.66px;background:#e3e3e3"></div><div style="left:178px;top:108.14px;width:71.5px;height:17.66px;background:#f6f6fd"></div><div style="left:0px;top:125.8px;width:32.5px;height:17.66px;background:#e3e3e3"></div><div style="left:178px;top:125.8px;width:71.5px;height:17.66px;background:#f6f6fd"></div><div style="left:0px;top:37px;width:260px;height:1px;background:#d8d8d8"></div><div style="left:0px;top:54.66px;width:250px;height:1px;background:#a0a0a0"></div><div style="left:0px;top:72.32px;width:250px;height:1px;background:#a0a0a0"></div><div style="left:0px;top:89.98px;width:250px;height:1px;background:#a0a0a0"></div><div style="left:0px;top:107.64px;width:250px;height:1px;background:#a0a0a0"></div><div style="left:0px;top:125.3px;width:250px;height:1px;background:#a0a0a0"></div><div style="left:0px;top:142.96px;width:250px;height:1px;background:#a0a0a0"></div><div style="left:32px;top:37.5px;width:1px;height:105.96px;background:#a0a0a0"></div><div style="left:32px;top:0px;width:1px;height:37.5px;background:#e5e5e5"></div><div style="left:68.5px;top:37.5px;width:1px;height:105.96px;background:#a0a0a0"></div><div style="left:68.5px;top:0px;width:1px;height:37.5px;background:#e5e5e5"></div><div style="left:104.75px;top:37.5px;width:1px;height:105.96px;background:#a0a0a0"></div><div style="left:104.75px;top:0px;width:1px;height:37.5px;background:#e5e5e5"></div><div style="left:141px;top:37.5px;width:1px;height:105.96px;background:#a0a0a0"></div><div style="left:141px;top:0px;width:1px;height:37.5px;background:#e5e5e5"></div><div style="left:177.5px;top:37.5px;width:1px;height:105.96px;background:#a0a0a0"></div><div style="left:177.5px;top:0px;width:1px;height:37.5px;background:#e5e5e5"></div><div style="left:212.5px;top:37.5px;width:1px;height:105.96px;background:#a0a0a0"></div><div style="left:212.5px;top:0px;width:1px;height:37.5px;background:#e5e5e5"></div><div class="t" style="left:-43.75px;top:7.99px;width:120px;text-align:center;font-size:10.62px;line-height:12.75px;color:#000;transform:scaleX(0.8);">Bolt</div><div class="t" style="left:-43.75px;top:18.39px;width:120px;text-align:center;font-size:10.62px;line-height:12.75px;color:#000;transform:scaleX(0.8);">Type</div><div class="t" style="left:-9.25px;top:7.99px;width:120px;text-align:center;font-size:10.62px;line-height:12.75px;color:#000;transform:scaleX(0.8);">Fnt</div><div class="t" style="left:-9.25px;top:18.39px;width:120px;text-align:center;font-size:10.62px;line-height:12.75px;color:#000;transform:scaleX(0.8);">[MPa]</div><div class="t" style="left:27.12px;top:7.99px;width:120px;text-align:center;font-size:10.62px;line-height:12.75px;color:#000;transform:scaleX(0.8);">Fnv</div><div class="t" style="left:27.12px;top:18.39px;width:120px;text-align:center;font-size:10.62px;line-height:12.75px;color:#000;transform:scaleX(0.8);">[MPa]</div><div class="t" style="left:63.38px;top:7.99px;width:120px;text-align:center;font-size:10.62px;line-height:12.75px;color:#000;transform:scaleX(0.8);">Ab</div><div class="t" style="left:63.38px;top:18.39px;width:120px;text-align:center;font-size:10.62px;line-height:12.75px;color:#000;transform:scaleX(0.8);">[mm^2]</div><div class="t" style="left:99.75px;top:7.99px;width:120px;text-align:center;font-size:10.62px;line-height:12.75px;color:#000;transform:scaleX(0.8);">Dia</div><div class="t" style="left:99.75px;top:18.39px;width:120px;text-align:center;font-size:10.62px;line-height:12.75px;color:#000;transform:scaleX(0.8);">[mm]</div><div class="t" style="left:135.5px;top:2.79px;width:120px;text-align:center;font-size:10.62px;line-height:12.75px;color:#000;transform:scaleX(0.8);">Hole</div><div class="t" style="left:135.5px;top:13.19px;width:120px;text-align:center;font-size:10.62px;line-height:12.75px;color:#000;transform:scaleX(0.8);">Dia</div><div class="t" style="left:135.5px;top:23.59px;width:120px;text-align:center;font-size:10.62px;line-height:12.75px;color:#000;transform:scaleX(0.8);">[mm]</div><div class="t" style="left:171.25px;top:13.19px;width:120px;text-align:center;font-size:10.62px;line-height:12.75px;color:#000;transform:scaleX(0.8);">Count</div><div class="t" style="left:6.5px;top:40.17px;font-size:10.62px;line-height:12.75px;color:#fff;transform:scaleX(0.8000);transform-origin:0 0;">M16</div><div class="t" style="left:-9.25px;top:40.17px;width:120px;text-align:center;font-size:10.62px;line-height:12.75px;color:#000;transform:scaleX(0.8);">300</div><div class="t" style="left:27.12px;top:40.17px;width:120px;text-align:center;font-size:10.62px;line-height:12.75px;color:#000;transform:scaleX(0.8);">160</div><div class="t" style="left:63.38px;top:40.17px;width:120px;text-align:center;font-size:10.62px;line-height:12.75px;color:#000;transform:scaleX(0.8);">201</div><div class="t" style="left:99.75px;top:40.17px;width:120px;text-align:center;font-size:10.62px;line-height:12.75px;color:#000;transform:scaleX(0.8);">16</div><div class="t" style="left:135.5px;top:40.17px;width:120px;text-align:center;font-size:10.62px;line-height:12.75px;color:#000;transform:scaleX(0.8);">18</div><div class="t" style="left:171.25px;top:40.17px;width:120px;text-align:center;font-size:10.62px;line-height:12.75px;color:#000;transform:scaleX(0.8);">2892</div><div class="t" style="left:6.5px;top:57.83px;font-size:10.62px;line-height:12.75px;color:#000;transform:scaleX(0.8000);transform-origin:0 0;">M20</div><div class="t" style="left:-9.25px;top:57.83px;width:120px;text-align:center;font-size:10.62px;line-height:12.75px;color:#000;transform:scaleX(0.8);">300</div><div class="t" style="left:27.12px;top:57.83px;width:120px;text-align:center;font-size:10.62px;line-height:12.75px;color:#000;transform:scaleX(0.8);">160</div><div class="t" style="left:63.38px;top:57.83px;width:120px;text-align:center;font-size:10.62px;line-height:12.75px;color:#000;transform:scaleX(0.8);">314</div><div class="t" style="left:99.75px;top:57.83px;width:120px;text-align:center;font-size:10.62px;line-height:12.75px;color:#000;transform:scaleX(0.8);">20</div><div class="t" style="left:135.5px;top:57.83px;width:120px;text-align:center;font-size:10.62px;line-height:12.75px;color:#000;transform:scaleX(0.8);">22</div><div class="t" style="left:171.25px;top:57.83px;width:120px;text-align:center;font-size:10.62px;line-height:12.75px;color:#000;transform:scaleX(0.8);">1888</div><div class="t" style="left:6.5px;top:75.49px;font-size:10.62px;line-height:12.75px;color:#000;transform:scaleX(0.8000);transform-origin:0 0;">M22</div><div class="t" style="left:-9.25px;top:75.49px;width:120px;text-align:center;font-size:10.62px;line-height:12.75px;color:#000;transform:scaleX(0.8);">600</div><div class="t" style="left:27.12px;top:75.49px;width:120px;text-align:center;font-size:10.62px;line-height:12.75px;color:#000;transform:scaleX(0.8);">400</div><div class="t" style="left:63.38px;top:75.49px;width:120px;text-align:center;font-size:10.62px;line-height:12.75px;color:#000;transform:scaleX(0.8);">380</div><div class="t" style="left:99.75px;top:75.49px;width:120px;text-align:center;font-size:10.62px;line-height:12.75px;color:#000;transform:scaleX(0.8);">22</div><div class="t" style="left:135.5px;top:75.49px;width:120px;text-align:center;font-size:10.62px;line-height:12.75px;color:#000;transform:scaleX(0.8);">24</div><div class="t" style="left:171.25px;top:75.49px;width:120px;text-align:center;font-size:10.62px;line-height:12.75px;color:#000;transform:scaleX(0.8);">0</div><div class="t" style="left:6.5px;top:93.15px;font-size:10.62px;line-height:12.75px;color:#000;transform:scaleX(0.8000);transform-origin:0 0;">M24</div><div class="t" style="left:-9.25px;top:93.15px;width:120px;text-align:center;font-size:10.62px;line-height:12.75px;color:#000;transform:scaleX(0.8);">600</div><div class="t" style="left:27.12px;top:93.15px;width:120px;text-align:center;font-size:10.62px;line-height:12.75px;color:#000;transform:scaleX(0.8);">400</div><div class="t" style="left:63.38px;top:93.15px;width:120px;text-align:center;font-size:10.62px;line-height:12.75px;color:#000;transform:scaleX(0.8);">452</div><div class="t" style="left:99.75px;top:93.15px;width:120px;text-align:center;font-size:10.62px;line-height:12.75px;color:#000;transform:scaleX(0.8);">24</div><div class="t" style="left:135.5px;top:93.15px;width:120px;text-align:center;font-size:10.62px;line-height:12.75px;color:#000;transform:scaleX(0.8);">27</div><div class="t" style="left:171.25px;top:93.15px;width:120px;text-align:center;font-size:10.62px;line-height:12.75px;color:#000;transform:scaleX(0.8);">912</div><div class="t" style="left:6.5px;top:110.81px;font-size:10.62px;line-height:12.75px;color:#000;transform:scaleX(0.8000);transform-origin:0 0;">M27</div><div class="t" style="left:-9.25px;top:110.81px;width:120px;text-align:center;font-size:10.62px;line-height:12.75px;color:#000;transform:scaleX(0.8);">600</div><div class="t" style="left:27.12px;top:110.81px;width:120px;text-align:center;font-size:10.62px;line-height:12.75px;color:#000;transform:scaleX(0.8);">400</div><div class="t" style="left:63.38px;top:110.81px;width:120px;text-align:center;font-size:10.62px;line-height:12.75px;color:#000;transform:scaleX(0.8);">572</div><div class="t" style="left:99.75px;top:110.81px;width:120px;text-align:center;font-size:10.62px;line-height:12.75px;color:#000;transform:scaleX(0.8);">27</div><div class="t" style="left:135.5px;top:110.81px;width:120px;text-align:center;font-size:10.62px;line-height:12.75px;color:#000;transform:scaleX(0.8);">30</div><div class="t" style="left:171.25px;top:110.81px;width:120px;text-align:center;font-size:10.62px;line-height:12.75px;color:#000;transform:scaleX(0.8);">0</div><div class="t" style="left:6.5px;top:128.47px;font-size:10.62px;line-height:12.75px;color:#000;transform:scaleX(0.8000);transform-origin:0 0;">M30</div><div class="t" style="left:-9.25px;top:128.47px;width:120px;text-align:center;font-size:10.62px;line-height:12.75px;color:#000;transform:scaleX(0.8);">600</div><div class="t" style="left:27.12px;top:128.47px;width:120px;text-align:center;font-size:10.62px;line-height:12.75px;color:#000;transform:scaleX(0.8);">400</div><div class="t" style="left:63.38px;top:128.47px;width:120px;text-align:center;font-size:10.62px;line-height:12.75px;color:#000;transform:scaleX(0.8);">708</div><div class="t" style="left:99.75px;top:128.47px;width:120px;text-align:center;font-size:10.62px;line-height:12.75px;color:#000;transform:scaleX(0.8);">30</div><div class="t" style="left:135.5px;top:128.47px;width:120px;text-align:center;font-size:10.62px;line-height:12.75px;color:#000;transform:scaleX(0.8);">33</div><div class="t" style="left:171.25px;top:128.47px;width:120px;text-align:center;font-size:10.62px;line-height:12.75px;color:#000;transform:scaleX(0.8);">0</div><div style="left:0px;top:155px;width:251px;height:13px;background:#efefef;border-top:1px solid #fff;box-sizing:border-box"></div><div style="left:18.9px;top:161px;width:218px;height:1.6px;background:#8a8a8a"></div></div><div style="left:440.2px;top:62.8px;width:252px;height:169.2px;border:1px solid #3a3a3a;box-sizing:border-box"></div><div style="left:652.7px;top:53px;width:42.3px;height:161.5px;border:4.1px solid #ec1c24;box-sizing:border-box"></div><div style="left:602.8px;top:277.6px;width:10.5px;height:10.6px;background:#005fb8;border-radius:2px"></div><svg style="position:absolute;left:603px;top:278px" width="10" height="10" viewBox="0 0 10 10"><path d="M2.3 5.2 L4.2 7 L7.8 3.2" stroke="#fff" stroke-width="1" fill="none"/></svg><div class="t" style="left:616.4px;top:276.17px;font-size:11.12px;line-height:13.35px;color:#000;transform:scaleX(0.8021);transform-origin:0 0;">Combinations only</div><div style="left:440px;top:294.5px;width:251.5px;height:243px;background:#fff;border:1px solid #8c8c8c;border-right-color:#a8a8a8;border-bottom-color:#a8a8a8;box-sizing:border-box"></div><div style="left:441.5px;top:296.2px;width:235.5px;height:239.8px;background:#0078d7"></div><div style="left:678.2px;top:296px;width:12.5px;height:240.5px;background:#f1f1f1;border-left:1px solid #fff;box-sizing:border-box"></div><div style="left:683px;top:319px;width:2px;height:204px;background:#8a8a8a"></div><div class="t" style="left:444.3px;top:296.89px;font-size:9.35px;line-height:10.34px;color:#fff;transform:scaleX(0.9046);transform-origin:0 0;-webkit-text-stroke:0.1px #fff">77:DESIGN : H-NR-Wind-90-L<br>78:DESIGN : H-CM-Wind-90-L<br>79:DESIGN : H-AC-Arm1-GW-L<br>80:DESIGN : H-AC-Arm1-C1-L<br>81:DESIGN : H-AC-Arm1-C2-L<br>82:DESIGN : H-AC-Arm1-C3-L<br>83:DESIGN : H-AC-Arm2-GW-L<br>84:DESIGN : H-AC-Arm2-C1-L<br>85:DESIGN : H-AC-Arm2-C2-L<br>86:DESIGN : H-AC-Arm2-C3-L<br>87:DESIGN : H-WD-Wind-60-Q3<br>88:DESIGN : L-WD-Wind-90-L<br>89:DESIGN : L-NR-Wind-90-L<br>90:DESIGN : L-CM-Wind-90-L<br>91:DESIGN : L-AC-Arm1-GW-L<br>92:DESIGN : L-AC-Arm1-C1-L<br>93:DESIGN : L-AC-Arm1-C2-L<br>94:DESIGN : L-AC-Arm1-C3-L<br>95:DESIGN : L-AC-Arm2-GW-L<br>96:DESIGN : L-AC-Arm2-C1-L<br>97:DESIGN : L-AC-Arm2-C2-L<br>98:DESIGN : L-AC-Arm2-C3-L<br>99:DESIGN : L-WD-Wind-60-Q3</div><div class="t" style="left:27.1px;top:565.85px;font-size:6.5px;line-height:7.8px;color:#000;transform:scaleX(1.0000);transform-origin:0 0;">*</div><div class="t" style="left:33.3px;top:564.27px;font-size:11.12px;line-height:13.35px;color:#000;transform:scaleX(0.8008);transform-origin:0 0;">Number of bolts will be computed for the chosen loadcases/combinations</div><div style="left:431px;top:566px;width:82.5px;height:17px;border:1px solid #d0d0d0;border-radius:3px;background:#fdfdfd;box-sizing:border-box"></div><div class="t" style="left:436.6px;top:567.77px;font-size:11.12px;line-height:13.35px;color:#000;transform:scaleX(0.7964);transform-origin:0 0;">Rerun Bolt Design</div><div style="left:582px;top:566px;width:58.5px;height:17px;border:1px solid #d0d0d0;border-radius:3px;background:#fdfdfd;box-sizing:border-box"></div><div class="t" style="left:599.6px;top:567.77px;font-size:11.12px;line-height:13.35px;color:#000;transform:scaleX(0.8087);transform-origin:0 0;">Close</div><div style="left:644.5px;top:566px;width:58.7px;height:17px;border:1px solid #d0d0d0;border-radius:3px;background:#fdfdfd;box-sizing:border-box"></div><div class="t" style="left:665px;top:567.77px;font-size:11.12px;line-height:13.35px;color:#000;transform:scaleX(0.7867);transform-origin:0 0;">Help</div>
</body></html>
